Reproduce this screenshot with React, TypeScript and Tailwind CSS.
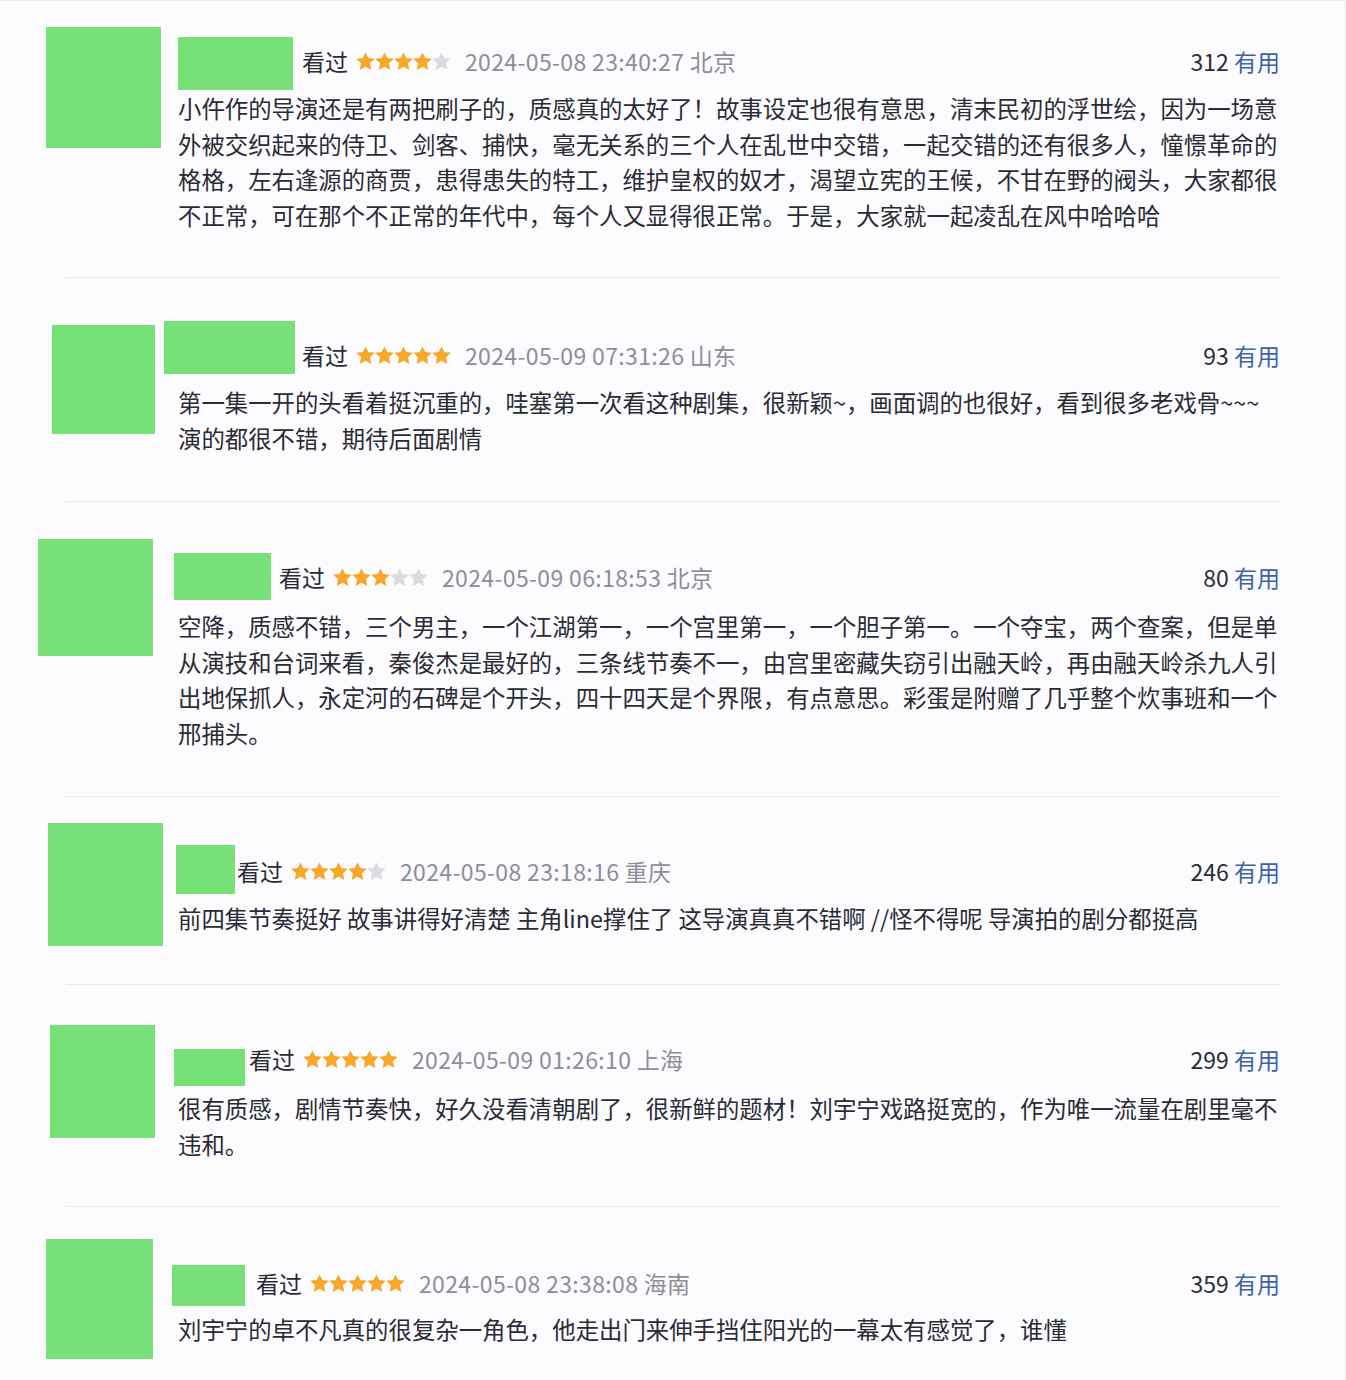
import React from "react";

type Comment = {
  sectionH: string;
  avatar: string;
  contentMt: string;
  nameBox: string;
  nameGap: string;
  stars: number;
  date: string;
  useful: string;
  bodyMt: string;
  lines: string[];
};

const comments: Comment[] = [
  {
    sectionH: "h-[276px]",
    avatar: "ml-[46px] mt-[26px] w-[115px] h-[121px]",
    contentMt: "mt-[40px]",
    nameBox: "ml-0 mt-[-4px] w-[115px] h-[53px]",
    nameGap: "mr-[9px]",
    stars: 4,
    date: "2024-05-08 23:40:27 北京",
    useful: "312",
    bodyMt: "mt-[10px]",
    lines: [
      "小仵作的导演还是有两把刷子的，质感真的太好了！故事设定也很有意思，清末民初的浮世绘，因为一场意",
      "外被交织起来的侍卫、剑客、捕快，毫无关系的三个人在乱世中交错，一起交错的还有很多人，憧憬革命的",
      "格格，左右逢源的商贾，患得患失的特工，维护皇权的奴才，渴望立宪的王候，不甘在野的阀头，大家都很",
      "不正常，可在那个不正常的年代中，每个人又显得很正常。于是，大家就一起凌乱在风中哈哈哈",
    ],
  },
  {
    sectionH: "h-[223px]",
    avatar: "ml-[52px] mt-[47px] w-[103px] h-[109px]",
    contentMt: "mt-[57px]",
    nameBox: "ml-[-14px] mt-[-14px] w-[131px] h-[53px]",
    nameGap: "mr-[7px]",
    stars: 5,
    date: "2024-05-09 07:31:26 山东",
    useful: "93",
    bodyMt: "mt-[10px]",
    lines: [
      "第一集一开的头看着挺沉重的，哇塞第一次看这种剧集，很新颖~，画面调的也很好，看到很多老戏骨~~~",
      "演的都很不错，期待后面剧情",
    ],
  },
  {
    sectionH: "h-[294px]",
    avatar: "ml-[38px] mt-[37px] w-[115px] h-[117px]",
    contentMt: "mt-[55px]",
    nameBox: "ml-[-4px] mt-[-4px] w-[97px] h-[47px]",
    nameGap: "mr-[8px]",
    stars: 3,
    date: "2024-05-09 06:18:53 北京",
    useful: "80",
    bodyMt: "mt-[12px]",
    lines: [
      "空降，质感不错，三个男主，一个江湖第一，一个宫里第一，一个胆子第一。一个夺宝，两个查案，但是单",
      "从演技和台词来看，秦俊杰是最好的，三条线节奏不一，由宫里密藏失窃引出融天岭，再由融天岭杀九人引",
      "出地保抓人，永定河的石碑是个开头，四十四天是个界限，有点意思。彩蛋是附赠了几乎整个炊事班和一个",
      "邢捕头。",
    ],
  },
  {
    sectionH: "h-[187px]",
    avatar: "ml-[48px] mt-[26px] w-[115px] h-[123px]",
    contentMt: "mt-[54px]",
    nameBox: "ml-[-2px] mt-[-6px] w-[59px] h-[49px]",
    nameGap: "mr-[2px]",
    stars: 4,
    date: "2024-05-08 23:18:16 重庆",
    useful: "246",
    bodyMt: "mt-[10px]",
    lines: [
      "前四集节奏挺好 故事讲得好清楚 主角line撑住了 这导演真真不错啊 //怪不得呢 导演拍的剧分都挺高",
    ],
  },
  {
    sectionH: "h-[221px]",
    avatar: "ml-[50px] mt-[40px] w-[105px] h-[113px]",
    contentMt: "mt-[54px]",
    nameBox: "ml-[-4px] mt-[10px] w-[71px] h-[37px]",
    nameGap: "mr-[4px]",
    stars: 5,
    date: "2024-05-09 01:26:10 上海",
    useful: "299",
    bodyMt: "mt-[12px]",
    lines: [
      "很有质感，剧情节奏快，好久没看清朝剧了，很新鲜的题材！刘宇宁戏路挺宽的，作为唯一流量在剧里毫不",
      "违和。",
    ],
  },
  {
    sectionH: "h-[174px]",
    avatar: "ml-[46px] mt-[32px] w-[107px] h-[120px]",
    contentMt: "mt-[56px]",
    nameBox: "ml-[-6px] mt-[2px] w-[73px] h-[41px]",
    nameGap: "mr-[11px]",
    stars: 5,
    date: "2024-05-08 23:38:08 海南",
    useful: "359",
    bodyMt: "mt-[9px]",
    lines: [
      "刘宇宁的卓不凡真的很复杂一角色，他走出门来伸手挡住阳光的一幕太有感觉了，谁懂",
    ],
  },
];

function Star({ filled }: { filled: boolean }) {
  return (
    <svg width="19" height="19" viewBox="1 1.5 22 21" className="shrink-0">
      <polygon
        points="12,1.5 15.3,8 22.8,8.9 17.2,14.1 18.7,21.7 12,18 5.3,21.7 6.8,14.1 1.2,8.9 8.7,8"
        fill={filled ? "#f7a82a" : "#dcdce0"}
      />
    </svg>
  );
}

const FONT = { fontFamily: '"Noto Sans CJK SC", "Noto Sans", sans-serif' };

export default function App() {
  return (
    <div
      className="w-[1346px] h-[1380px] overflow-hidden bg-[#fcfcfe] border-t border-r border-[#ececf0]"
      style={FONT}
    >
      {comments.map((c, i) => (
        <div key={i}>
          {i > 0 && <div className="ml-[66px] w-[1214px] h-px bg-[#e9e9ee]" />}
          <div className={`flex items-start ${c.sectionH}`}>
            <div className="w-[178px] shrink-0">
              <div className={`bg-[#77e077] ${c.avatar}`} />
            </div>
            <div className={`w-[1102px] ${c.contentMt}`}>
              <div className="flex items-center h-[40px] text-[23px] leading-[40px]">
                <div className={`bg-[#77e077] self-start shrink-0 ${c.nameBox} ${c.nameGap}`} />
                <span className="text-[#2b2b38]">看过</span>
                <span className="flex ml-[8px] mr-[14px]">
                  {[0, 1, 2, 3, 4].map((s) => (
                    <Star key={s} filled={s < c.stars} />
                  ))}
                </span>
                <span className="text-[#8d8d9b] text-[23px] tracking-[0.35px]">{c.date}</span>
                <span className="ml-auto text-[23px]">
                  <span className="text-[#2b2b3c]">{c.useful}</span>{" "}
                  <span className="text-[#3c62a8]">有用</span>
                </span>
              </div>
              <div className={`${c.bodyMt} text-[23.4px] leading-[35.5px] text-[#2b2b36]`}>
                {c.lines.map((l, j) => (
                  <div key={j} className="whitespace-nowrap">
                    {l}
                  </div>
                ))}
              </div>
            </div>
          </div>
        </div>
      ))}
    </div>
  );
}
